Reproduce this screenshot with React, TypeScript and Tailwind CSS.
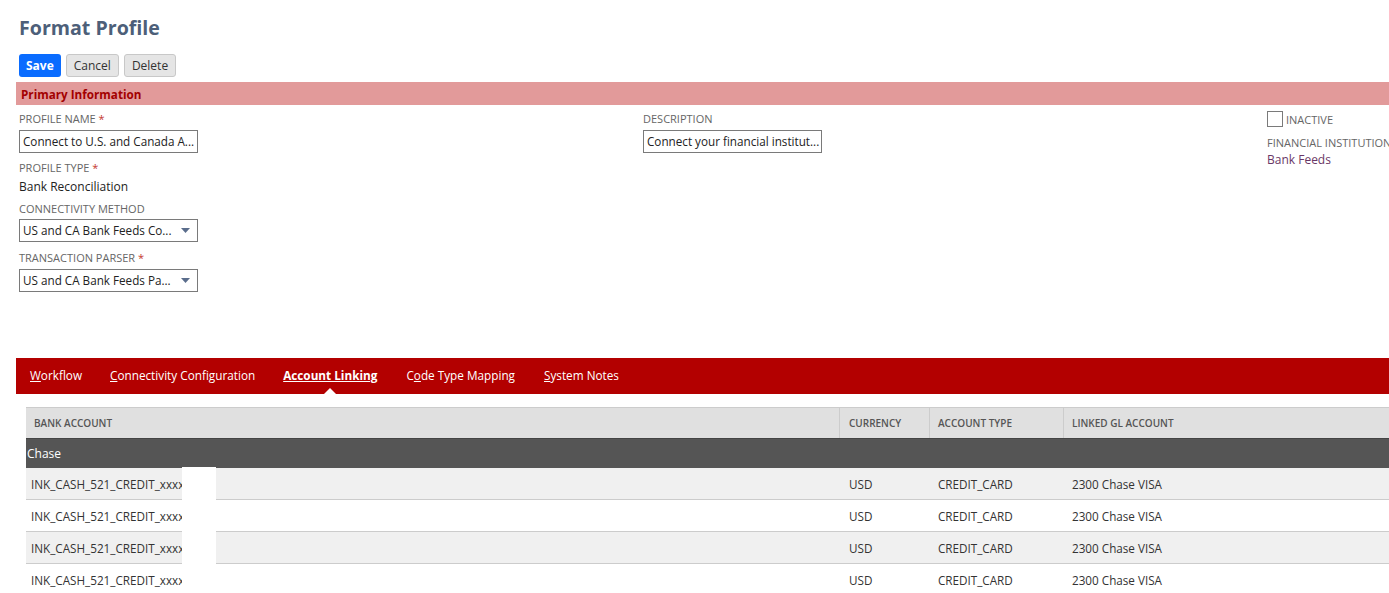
import React from 'react'

const font = { fontFamily: '"Open Sans", Arial, sans-serif' }

function Label({ text, required }: { text: string; required?: boolean }) {
  return (
    <div className="text-[11px] leading-[16px] text-[#666] uppercase">
      {text}
      {required && <span className="text-[#c4372d]"> *</span>}
    </div>
  )
}

function TextInput({ value }: { value: string }) {
  return (
    <div className="flex h-[23px] w-[179px] items-center overflow-hidden whitespace-nowrap border border-[#7a7a7a] bg-white px-[3px] text-[11.7px] text-[#222]">
      {value}
    </div>
  )
}

function Select({ value }: { value: string }) {
  return (
    <div className="flex h-[23px] w-[179px] items-center justify-between border border-[#7a7a7a] bg-white pl-[3px] pr-[7px] text-[11.7px] text-[#222]">
      <span className="whitespace-nowrap">{value}</span>
      <svg width="9" height="5" viewBox="0 0 9 5" className="shrink-0">
        <path d="M0 0h9L4.5 5z" fill="#5a6d8c" />
      </svg>
    </div>
  )
}

const rows = [0, 1, 2, 3]

export default function App() {
  return (
    <div className="relative h-[593px] w-[1389px] overflow-hidden bg-white" style={font}>
      <div className="pl-[16px]">
        <h1 className="pl-[3px] pt-[14px] text-[19.6px] font-bold leading-[28px] text-[#4d5f79]">Format Profile</h1>
        <div className="mt-[12px] flex gap-[5px] pl-[3px]">
          <button className="h-[23px] rounded-[3px] bg-[#0a6cff] px-[7px] text-[12px] font-bold text-white">Save</button>
          <button className="h-[23px] rounded-[3px] border border-[#c8c8c8] bg-[#e5e5e5] px-[7px] text-[12px] text-[#333]">Cancel</button>
          <button className="h-[23px] rounded-[3px] border border-[#c8c8c8] bg-[#e5e5e5] px-[7px] text-[12px] text-[#333]">Delete</button>
        </div>
        <div className="mt-[5px] flex h-[23px] items-center bg-[#e29a9a] pl-[5px] pt-[2px] text-[11.7px] font-bold text-[#a30000]">
          Primary Information
        </div>

        <div className="flex pl-[3px] pt-[6px]">
          <div className="w-[624px] shrink-0">
            <Label text="Profile Name" required />
            <div className="mt-[3px]"><TextInput value="Connect to U.S. and Canada A..." /></div>
            <div className="mt-[7px]"><Label text="Profile Type" required /></div>
            <div className="mt-[3px] text-[12px] leading-[16px] text-[#222]">Bank Reconciliation</div>
            <div className="mt-[6px]"><Label text="Connectivity Method" /></div>
            <div className="mt-[2px]"><Select value="US and CA Bank Feeds Co..." /></div>
            <div className="mt-[8px]"><Label text="Transaction Parser" required /></div>
            <div className="mt-[3px]"><Select value="US and CA Bank Feeds Pa..." /></div>
          </div>
          <div className="w-[624px] shrink-0">
            <Label text="Description" />
            <div className="mt-[3px]"><TextInput value="Connect your financial institut..." /></div>
          </div>
          <div className="-mt-[1px] shrink-0 whitespace-nowrap">
            <div className="flex items-center gap-[3px]">
              <div className="h-[16px] w-[16px] border border-[#7a7a7a] bg-white" />
              <span className="pt-[2px] text-[11px] leading-[16px] text-[#666]">INACTIVE</span>
            </div>
            <div className="mt-[7px]"><Label text="Financial Institution" /></div>
            <div className="mt-[1px] text-[12px] leading-[16px] text-[#6a3766]">Bank Feeds</div>
          </div>
        </div>

        <div className="mt-[66px] flex h-[36px] items-stretch bg-[#b30000] pl-[14px] text-[11.75px] text-white">
          <span className="mr-[28px] flex items-center"><span><u>W</u>orkflow</span></span>
          <span className="mr-[28px] flex items-center"><span><u>C</u>onnectivity Configuration</span></span>
          <span className="relative mr-[29px] flex items-center font-bold">
            <span className="underline">Account Linking</span>
            <span className="absolute bottom-0 left-1/2 h-0 w-0 -translate-x-1/2 border-x-[6px] border-b-[6px] border-x-transparent border-b-white" />
          </span>
          <span className="mr-[29px] flex items-center"><span>C<u>o</u>de Type Mapping</span></span>
          <span className="flex items-center"><span><u>S</u>ystem Notes</span></span>
        </div>

        <div className="ml-[10px] mt-[13px] text-[12px]">
          <div className="flex h-[31px] items-center border-t border-[#ccc] bg-[#e0e0e0] text-[10px] font-semibold uppercase text-[#555]">
            <div className="w-[814px] self-stretch border-r border-[#ccc] pl-[8px] leading-[30px]">Bank Account</div>
            <div className="w-[90px] self-stretch border-r border-[#ccc] pl-[9px] leading-[30px]">Currency</div>
            <div className="w-[134px] self-stretch border-r border-[#ccc] pl-[8px] leading-[30px]">Account Type</div>
            <div className="flex-1 pl-[8px]">Linked GL Account</div>
          </div>
          <div className="flex h-[30px] items-center border-t border-[#444] bg-[#555] pl-[1px] text-[12px] text-white">Chase</div>
          {rows.map((i) => (
            <div
              key={i}
              className={`flex h-[32px] items-center border-b border-[#ccc] pt-[2px] text-[11.7px] text-[#333] ${i % 2 === 0 ? 'bg-[#f0f0f0]' : 'bg-white'}`}
            >
              <div className="w-[814px] whitespace-nowrap pl-[5px]">INK_CASH_521_CREDIT_xxxx1234</div>
              <div className="w-[90px] pl-[9px]">USD</div>
              <div className="w-[134px] pl-[8px]">CREDIT_CARD</div>
              <div className="flex-1 pl-[8px]">2300 Chase VISA</div>
            </div>
          ))}
        </div>
      </div>
      <div className="absolute left-[182px] top-[467px] h-[126px] w-[34px] bg-white" />
    </div>
  )
}
